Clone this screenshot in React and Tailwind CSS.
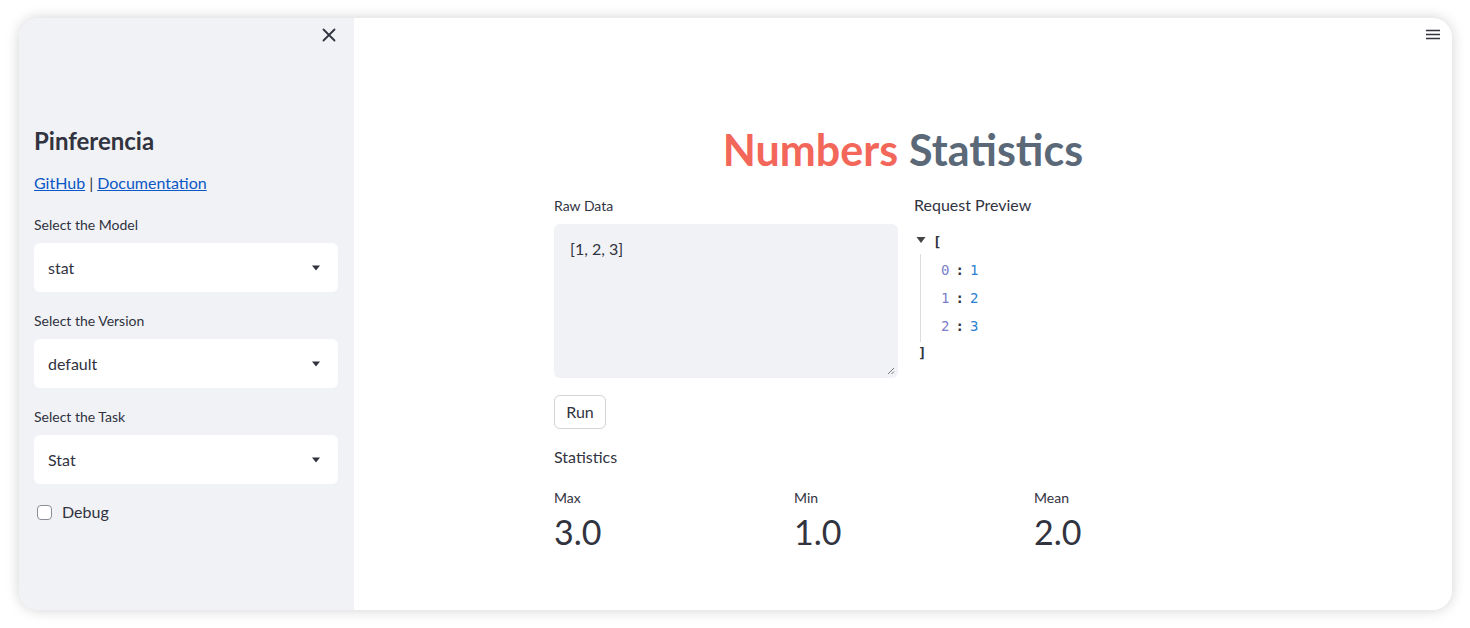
import React from 'react'

const font = { fontFamily: 'Lato, "Noto Sans", "Liberation Sans", sans-serif' }

function Caret() {
  return (
    <svg width="10" height="6" viewBox="0 0 10 6" className="text-[#31333f]">
      <path d="M1 0.5h8L5 5.5z" fill="currentColor" />
    </svg>
  )
}

function SelectBox({ label, value }) {
  return (
    <div>
      <div className="h-[20px] flex items-center text-[14px] text-[#31333f]">{label}</div>
      <div className="mt-[9px] h-[49px] bg-white rounded-[6px] flex items-center justify-between pl-[14px] pr-[17px]">
        <span className="text-[16px] text-[#31333f]">{value}</span>
        <Caret />
      </div>
    </div>
  )
}

function Metric({ label, value }) {
  return (
    <div>
      <div className="h-[20px] flex items-center text-[14px] text-[#31333f]">{label}</div>
      <div className="h-[48px] flex items-center text-[34px] text-[#31333f]">{value}</div>
    </div>
  )
}

export default function App() {
  return (
    <div className="w-[1470px] h-[628px] bg-white overflow-hidden pt-[18px] pl-[19px]" style={font}>
      <div className="w-[1433px] h-[592px] rounded-[20px] overflow-hidden flex shadow-[0_0_14px_rgba(0,0,0,0.18)]">
        {/* sidebar */}
        <div className="w-[335px] bg-[#f0f2f6] pl-[15px] pr-[16px]">
          <div className="h-[108px] pt-[10px] flex justify-end pr-[2px]">
            <svg width="14" height="14" viewBox="0 0 14 14">
              <path d="M1.5 1.5l11 11M12.5 1.5l-11 11" stroke="#31333f" strokeWidth="1.8" strokeLinecap="round" />
            </svg>
          </div>
          <div className="h-[30px] flex items-center text-[24px] font-bold text-[#31333f]">Pinferencia</div>
          <div className="mt-[15px] h-[24px] flex items-center text-[16px] text-[#31333f]">
            <a className="text-[#0b57c5] underline">GitHub</a>
            <span className="mx-[4px]">|</span>
            <a className="text-[#0b57c5] underline">Documentation</a>
          </div>
          <div className="mt-[19px] flex flex-col gap-[18px]">
            <SelectBox label="Select the Model" value="stat" />
            <SelectBox label="Select the Version" value="default" />
            <SelectBox label="Select the Task" value="Stat" />
          </div>
          <div className="mt-[18px] h-[20px] flex items-center gap-[10px] pl-[3px]">
            <div className="w-[15px] h-[15px] rounded-[4px] border-[1.5px] border-[#8b8d95] bg-white" />
            <span className="text-[16px] text-[#31333f]">Debug</span>
          </div>
        </div>

        {/* main */}
        <div className="flex-1 bg-white relative">
          <div className="absolute right-[11px] top-[11px]">
            <svg width="16" height="12" viewBox="0 0 16 12">
              <path d="M1 1.5h14M1 5.5h14M1 9.5h14" stroke="#31333f" strokeWidth="1.7" />
            </svg>
          </div>
          <div className="w-[698px] mx-auto pt-[106px]">
            <div className="h-[52px] flex items-center justify-center text-[43px] font-bold">
              <span className="text-[#f3675b]">Numbers</span>
              <span className="ml-[11px] text-[#5a6878]">Statistics</span>
            </div>
            <div className="mt-[18px] grid grid-cols-[344px_1fr] gap-[16px]">
              <div>
                <div className="h-[22px] flex items-center text-[14px] text-[#31333f]">Raw Data</div>
                <div className="mt-[8px] h-[154px] bg-[#f0f2f6] rounded-[6px] relative pl-[16px] pt-[13px] text-[16px] text-[#31333f]">
                  [1, 2, 3]
                  <svg className="absolute right-[3px] bottom-[3px]" width="8" height="8" viewBox="0 0 8 8">
                    <path d="M7 1L1 7M7 4.5L4.5 7" stroke="#777" strokeWidth="1" />
                  </svg>
                </div>
                <button className="mt-[17px] h-[34px] w-[52px] rounded-[6px] border border-[#d2d4da] bg-white text-[16px] text-[#31333f]">Run</button>
              </div>
              <div>
                <div className="h-[22px] flex items-center text-[16px] text-[#31333f]">Request Preview</div>
                <div className="mt-[14px] text-[14px] font-['DejaVu_Sans_Mono',monospace] text-[#31333f]">
                  <div className="h-[24px] flex items-center">
                    <svg width="10" height="8" viewBox="0 0 10 8" className="ml-[2px] mr-[7px] -mt-[4px]">
                      <path d="M0.5 1h9L5 7z" fill="#444" />
                    </svg>
                    <span className="font-bold">[</span>
                  </div>
                  <div className="ml-[6px] border-l border-[#dcdcdc] pl-[20px] py-[2px]">
                    {[['0', '1'], ['1', '2'], ['2', '3']].map(([k, v]) => (
                      <div key={k} className="h-[28px] flex items-center">
                        <span className="text-[#7b7fc8]">{k}</span>
                        <span className="mx-[6px] font-bold">:</span>
                        <span className="text-[#2b7fd0]">{v}</span>
                      </div>
                    ))}
                  </div>
                  <div className="h-[22px] flex items-center pl-[4px] font-bold">]</div>
                </div>
              </div>
            </div>
            <div className="mt-[16px] h-[24px] flex items-center text-[16px] text-[#31333f]">Statistics</div>
            <div className="mt-[18px] grid grid-cols-[224px_224px_1fr] gap-[16px]">
              <Metric label="Max" value="3.0" />
              <Metric label="Min" value="1.0" />
              <Metric label="Mean" value="2.0" />
            </div>
          </div>
        </div>
      </div>
    </div>
  )
}
